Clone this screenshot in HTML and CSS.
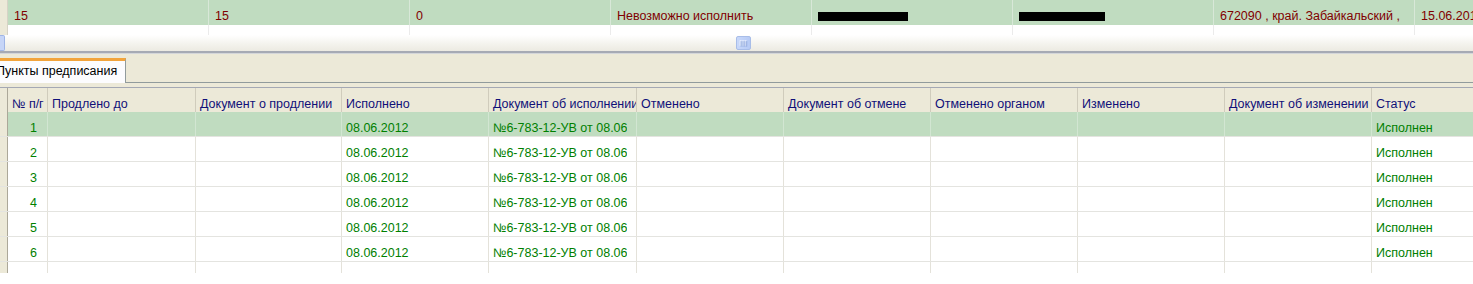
FILE: index.html
```html
<!DOCTYPE html>
<html lang="ru">
<head>
<meta charset="utf-8">
<title>Пункты предписания</title>
<link rel="stylesheet" href="styles.css">
</head>
<body>
<div class="screen">
  <div class="top-grid">
    <div class="trow trow-sel">
      <div class="tind"></div>
      <div class="tcell">15</div>
      <div class="tcell">15</div>
      <div class="tcell">0</div>
      <div class="tcell">Невозможно исполнить</div>
      <div class="tcell"><span class="redact r1"></span></div>
      <div class="tcell"><span class="redact r2"></span></div>
      <div class="tcell">672090 , край. Забайкальский ,</div>
      <div class="tcell">15.06.2012</div>
    </div>
    <div class="trow trow-empty">
      <div class="tind"></div>
      <div class="tcell"></div><div class="tcell"></div><div class="tcell"></div><div class="tcell"></div>
      <div class="tcell"></div><div class="tcell"></div><div class="tcell"></div><div class="tcell"></div>
    </div>
  </div>
  <div class="hscroll">
    <div class="sb-arrow"></div>
    <div class="sb-thumb">
      <svg width="15" height="14" viewBox="0 0 15 14"><g stroke="#ffffff" stroke-width="1"><line x1="4.5" y1="4" x2="4.5" y2="10"/><line x1="6.5" y1="4" x2="6.5" y2="10"/><line x1="8.5" y1="4" x2="8.5" y2="10"/><line x1="10.5" y1="4" x2="10.5" y2="10"/></g><g stroke="#8fa8dc" stroke-width="1"><line x1="5.5" y1="5" x2="5.5" y2="11"/><line x1="7.5" y1="5" x2="7.5" y2="11"/><line x1="9.5" y1="5" x2="9.5" y2="11"/><line x1="11.5" y1="5" x2="11.5" y2="11"/></g></svg>
    </div>
  </div>
  <div class="divider"></div>
  <div class="tabbar">
    <div class="tab">Пункты предписания</div>
    <div class="tab-rest"></div>
  </div>
  <div class="grid">
    <div class="grow ghead">
      <div class="gind"></div>
      <div class="gcell">№ п/г</div>
      <div class="gcell">Продлено до</div>
      <div class="gcell">Документ о продлении</div>
      <div class="gcell">Исполнено</div>
      <div class="gcell">Документ об исполнении</div>
      <div class="gcell">Отменено</div>
      <div class="gcell">Документ об отмене</div>
      <div class="gcell">Отменено органом</div>
      <div class="gcell">Изменено</div>
      <div class="gcell">Документ об изменении</div>
      <div class="gcell">Статус</div>
    </div>
    <div class="grow gsel">
      <div class="gind"></div>
      <div class="gcell num">1</div><div class="gcell"></div><div class="gcell"></div>
      <div class="gcell">08.06.2012</div><div class="gcell"><span class="clip">№6-783-12-УВ от 08.06.2012</span></div>
      <div class="gcell"></div><div class="gcell"></div><div class="gcell"></div><div class="gcell"></div><div class="gcell"></div>
      <div class="gcell">Исполнен</div>
    </div>
    <div class="grow">
      <div class="gind"></div>
      <div class="gcell num">2</div><div class="gcell"></div><div class="gcell"></div>
      <div class="gcell">08.06.2012</div><div class="gcell"><span class="clip">№6-783-12-УВ от 08.06.2012</span></div>
      <div class="gcell"></div><div class="gcell"></div><div class="gcell"></div><div class="gcell"></div><div class="gcell"></div>
      <div class="gcell">Исполнен</div>
    </div>
    <div class="grow">
      <div class="gind"></div>
      <div class="gcell num">3</div><div class="gcell"></div><div class="gcell"></div>
      <div class="gcell">08.06.2012</div><div class="gcell"><span class="clip">№6-783-12-УВ от 08.06.2012</span></div>
      <div class="gcell"></div><div class="gcell"></div><div class="gcell"></div><div class="gcell"></div><div class="gcell"></div>
      <div class="gcell">Исполнен</div>
    </div>
    <div class="grow">
      <div class="gind"></div>
      <div class="gcell num">4</div><div class="gcell"></div><div class="gcell"></div>
      <div class="gcell">08.06.2012</div><div class="gcell"><span class="clip">№6-783-12-УВ от 08.06.2012</span></div>
      <div class="gcell"></div><div class="gcell"></div><div class="gcell"></div><div class="gcell"></div><div class="gcell"></div>
      <div class="gcell">Исполнен</div>
    </div>
    <div class="grow">
      <div class="gind"></div>
      <div class="gcell num">5</div><div class="gcell"></div><div class="gcell"></div>
      <div class="gcell">08.06.2012</div><div class="gcell"><span class="clip">№6-783-12-УВ от 08.06.2012</span></div>
      <div class="gcell"></div><div class="gcell"></div><div class="gcell"></div><div class="gcell"></div><div class="gcell"></div>
      <div class="gcell">Исполнен</div>
    </div>
    <div class="grow">
      <div class="gind"></div>
      <div class="gcell num">6</div><div class="gcell"></div><div class="gcell"></div>
      <div class="gcell">08.06.2012</div><div class="gcell"><span class="clip">№6-783-12-УВ от 08.06.2012</span></div>
      <div class="gcell"></div><div class="gcell"></div><div class="gcell"></div><div class="gcell"></div><div class="gcell"></div>
      <div class="gcell">Исполнен</div>
    </div>
    <div class="grow gpartial">
      <div class="gind"></div>
      <div class="gcell"></div><div class="gcell"></div><div class="gcell"></div>
      <div class="gcell"></div><div class="gcell"></div>
      <div class="gcell"></div><div class="gcell"></div><div class="gcell"></div><div class="gcell"></div><div class="gcell"></div>
      <div class="gcell"></div>
    </div>
  </div>
</div>
</body>
</html>
```
FILE: styles.css
```css
html, body {
  margin: 0;
  padding: 0;
  background: #ffffff;
}
body {
  width: 1473px;
  height: 284px;
  overflow: hidden;
  font-family: "Liberation Sans", Arial, sans-serif;
  font-size: 12.5px;
}
.screen {
  width: 1473px;
  overflow: hidden;
}

/* top grid */
.top-grid {
  width: 1600px;
}
.trow {
  display: grid;
  grid-template-columns: 8px repeat(7, 201px) 185px;
}
.trow-sel {
  height: 25px;
  background: #c0dcc0;
  color: #800000;
}
.trow-empty {
  height: 10px;
  background: #ffffff;
}
.tind {
  background: #ece9d8;
  border-right: 1px solid #d6d3c6;
}
.tcell {
  box-sizing: border-box;
  border-right: 1px solid #d8e8d8;
  padding-left: 6px;
  line-height: 33px;
  white-space: nowrap;
  overflow: hidden;
}
.trow-empty .tcell {
  border-right-color: #ebebeb;
}
.redact {
  display: inline-block;
  height: 9px;
  background: #000000;
  vertical-align: -1px;
}
.r1 { width: 90px; }
.r2 { width: 86px; }

/* horizontal scrollbar */
.hscroll {
  height: 16px;
  display: flex;
  align-items: center;
  background: linear-gradient(#ffffff, #f3f2ec 60%, #eceae2);
}
.sb-arrow {
  width: 4px;
  height: 14px;
  background: #c6d5f7;
  border: 1px solid #9fb5e6;
  border-left: none;
  border-radius: 0 2px 2px 0;
}
.sb-thumb {
  width: 15px;
  height: 14px;
  margin-left: 731px;
  background: linear-gradient(90deg, #c8d8fa, #b6caf5);
  border: 1px solid #a8bde8;
  border-radius: 2px;
  box-sizing: border-box;
  display: flex;
}
.sb-thumb svg {
  display: block;
  margin-left: -1px;
  margin-top: -1px;
}

.divider {
  height: 2px;
  background: #a6aab4;
  border-bottom: 1px solid #d4d6da;
}

/* tab bar */
.tabbar {
  height: 33px;
  background: #ece9d8;
  display: flex;
  align-items: flex-end;
  padding-bottom: 4px;
  box-sizing: border-box;
}
.tab {
  margin-left: -8px;
  height: 25px;
  box-sizing: border-box;
  padding: 0 8px 0 4px;
  background: #fcfcfe;
  border-top: 3px solid #f2a43c;
  border-right: 1px solid #919b9c;
  line-height: 21px;
  color: #000000;
  white-space: nowrap;
}
.tab-rest {
  flex: 1;
  height: 1px;
  background: #919b9c;
}

/* lower grid */
.grid {
  width: 1600px;
  border-top: 1px solid #a4a8b4;
}
.grow {
  display: grid;
  grid-template-columns: 8px 40px 148px 146px 147px 148px 147px 147px 147px 147px 147px 180px;
  height: 25px;
  box-sizing: border-box;
  border-bottom: 1px solid #e4e4e0;
  color: #008000;
}
.ghead {
  height: 24px;
  background: #ece9d8;
  color: #101078;
  border-bottom: none;
}
.ghead .gcell {
  border-right: 1px solid #d0ccbc;
  line-height: 32px;
}
.gsel {
  background: #c0dcc0;
}
.gpartial {
  height: 11px;
  border-bottom: none;
}
.gind {
  background: #ece9d8;
  border-right: 1px solid #aca899;
}
.gcell {
  box-sizing: border-box;
  border-right: 1px solid #e4e2da;
  padding-left: 4px;
  line-height: 33px;
  white-space: nowrap;
  overflow: hidden;
}
.gsel .gcell {
  border-right-color: #d2e6d2;
}
.gcell.num {
  text-align: right;
  padding-right: 10px;
}
.clip {
  display: block;
  width: 134px;
  overflow: hidden;
}
```
